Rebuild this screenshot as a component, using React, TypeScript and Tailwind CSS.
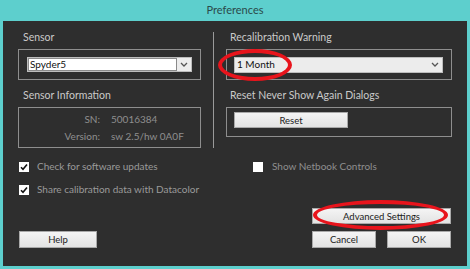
import React from 'react'

function Check() {
  return (
    <span className="flex h-[10px] w-[10px] items-center justify-center bg-white">
      <svg width="8" height="8" viewBox="0 0 8 8">
        <path d="M1 4.2 L3 6.2 L7 1.5" fill="none" stroke="#111" strokeWidth="1.6" />
      </svg>
    </span>
  )
}

function Chevron() {
  return (
    <svg width="8" height="5" viewBox="0 0 8 5">
      <path d="M1 1 L4 4 L7 1" fill="none" stroke="#555" strokeWidth="1.3" />
    </svg>
  )
}

function Btn({ label, className }: { label: string; className: string }) {
  return (
    <div
      className={
        'flex items-center justify-center border border-[#a9a9a9] bg-gradient-to-b from-[#f4f4f4] to-[#e3e3e3] text-[9.5px] text-[#1b1b1b] ' +
        className
      }
    >
      {label}
    </div>
  )
}

export default function App() {
  return (
    <div
      className="relative h-[269px] w-[470px] overflow-hidden bg-[#5dcfcd]"
      style={{ fontFamily: 'Lato, "Noto Sans", sans-serif' }}
    >
      {/* title bar */}
      <div className="flex h-[21px] items-center justify-center text-[11px] text-[#2b4a4a]">Preferences</div>

      {/* body */}
      <div className="mx-[3px] flex h-[245px] flex-col bg-[#2e2e2e] pt-[9px] text-[10.5px] leading-[15px]">
        <div className="flex pl-[15px]">
          {/* left column */}
          <div className="flex w-[183px] flex-col">
            <div className="h-[15px] pl-[5px] text-[#cacaca]">Sensor</div>
            <div className="mt-[4px] flex h-[31px] items-center border border-[#8e8e8e] px-[8px]">
              <div className="flex h-[15px] w-[165px] items-center border border-[#bdbdbd] bg-[#ececec]">
                <div className="flex h-[13px] w-[149px] items-center border border-[#8a8a8a] bg-white pl-[1px] text-[10px] text-[#111]">
                  Spyder5
                </div>
                <div className="flex flex-1 justify-center">
                  <Chevron />
                </div>
              </div>
            </div>
            <div className="mt-[8px] h-[15px] pl-[5px] text-[#cacaca]">Sensor Information</div>
            <div className="mt-[4px] flex h-[41px] flex-col justify-center gap-[2px] border border-[#8e8e8e] text-[10px] text-[#8e8e8e]">
              <div className="flex">
                <span className="w-[81px] text-right">SN:</span>
                <span className="ml-[11px]">50016384</span>
              </div>
              <div className="flex">
                <span className="w-[81px] text-right">Version:</span>
                <span className="ml-[11px]">sw 2.5/hw 0A0F</span>
              </div>
            </div>
          </div>

          {/* divider */}
          <div className="ml-[12px] mt-[2px] h-[116px] w-px bg-[#9a9a9a]" />

          {/* right column */}
          <div className="ml-[12px] flex w-[226px] flex-col">
            <div className="h-[15px] pl-[4px] text-[#cacaca]">Recalibration Warning</div>
            <div className="mt-[4px] flex h-[31px] items-center border border-[#8e8e8e] pl-[7px]">
              <div className="flex h-[16px] w-[209px] items-center justify-between border border-[#bdbdbd] bg-[#ececec] pl-[2px] pr-[3px] text-[10px] text-[#111]">
                <span>1 Month</span>
                <Chevron />
              </div>
            </div>
            <div className="mt-[8px] h-[15px] pl-[4px] text-[#cacaca]">Reset Never Show Again Dialogs</div>
            <div className="mt-[4px] h-[30px] border border-[#8e8e8e] pl-[7px] pt-[4px]">
              <Btn label="Reset" className="h-[16px] w-[114px]" />
            </div>
          </div>
        </div>

        {/* checkboxes */}
        <div className="mt-[11px] flex h-[15px] items-center pl-[16px] text-[10px] text-[#9a9a9a]">
          <div className="flex w-[234px] items-center gap-[8px]">
            <Check />
            <span>Check for software updates</span>
          </div>
          <div className="flex items-center gap-[9px] text-[#8e8e8e]">
            <span className="h-[10px] w-[10px] bg-white" />
            <span>Show Netbook Controls</span>
          </div>
        </div>
        <div className="mt-[8px] flex h-[15px] items-center gap-[8px] pl-[16px] text-[10px] text-[#9a9a9a]">
          <Check />
          <span>Share calibration data with Datacolor</span>
        </div>

        {/* buttons */}
        <div className="mt-[11px] flex justify-end pr-[16px]">
          <Btn label="Advanced Settings" className="h-[16px] w-[139px] border-[#7fb4e0]" />
        </div>
        <div className="mt-[7px] flex items-center pl-[16px] pr-[16px]">
          <Btn label="Help" className="h-[17px] w-[78px]" />
          <div className="flex-1" />
          <Btn label="Cancel" className="h-[17px] w-[64px]" />
          <Btn label="OK" className="ml-[11px] h-[17px] w-[64px]" />
        </div>
      </div>

      {/* red annotation ellipses */}
      <div className="pointer-events-none absolute left-[218px] top-[49px] h-[32px] w-[74px] rounded-[50%] border-[4px] border-[#e8141c]" />
      <div className="pointer-events-none absolute left-[313px] top-[200px] h-[30px] w-[135px] rounded-[50%] border-[4px] border-[#e8141c]" />
    </div>
  )
}
